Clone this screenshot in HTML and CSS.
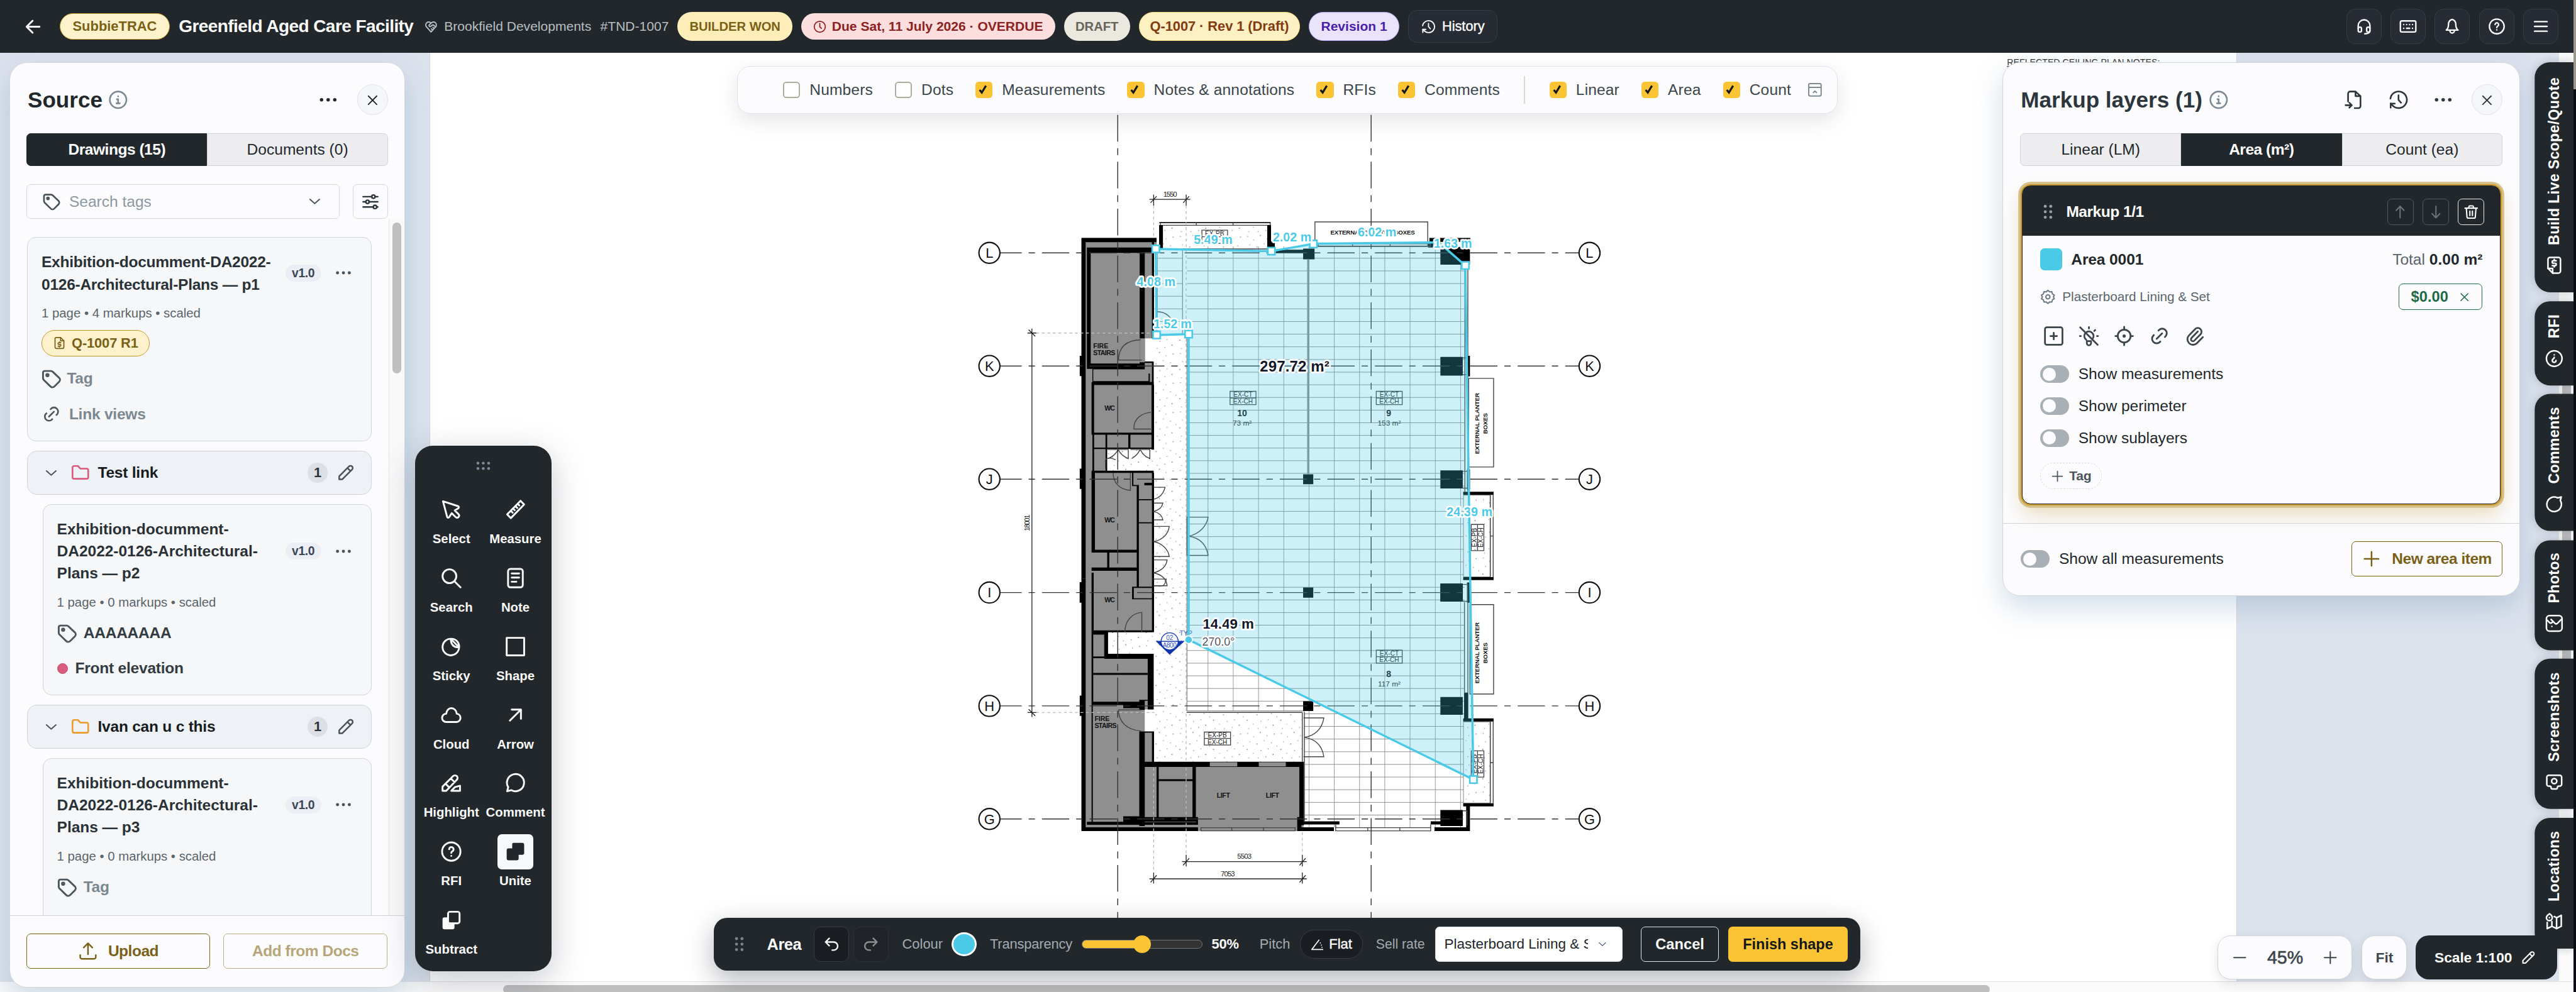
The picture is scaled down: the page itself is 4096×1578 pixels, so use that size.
FILE: index.html
```html
<!DOCTYPE html>
<html lang="en">
<head>
<meta charset="utf-8">
<title>Greenfield Aged Care Facility</title>
<link rel="stylesheet" href="styles.css">
</head>
<body>
<svg class="defs" aria-hidden="true">
  <symbol id="i-back" viewBox="0 0 24 24"><path d="M5 12h14M5 12l6.500 6.500M5 12l6.500-6.500"/></symbol>
  <symbol id="i-heart" viewBox="0 0 24 24"><path d="M19.500 12.600 12 21l-7.500-8.400A5 5 0 1 1 12 6a5 5 0 1 1 7.500 6.600"/><path d="M12 6 8.700 9.300a1 1 0 0 0 0 1.400l.6.600c.7.700 1.800.700 2.500 0l1-1a3.200 3.200 0 0 1 4.500 0l2.200 2.200M12.500 15.500l2 2M15 13l2 2"/></symbol>
  <symbol id="i-clock" viewBox="0 0 24 24"><circle cx="12" cy="12" r="10"/><path d="M12 6v6l3 3"/></symbol>
  <symbol id="i-history" viewBox="0 0 24 24"><path d="M12 6.500V12l3 3.500"/><path d="M5.500 19.500A10 10 0 1 0 2.200 10.500"/><path d="M2.500 21.500v-5h5"/><path d="M2.500 16.500l3 3"/></symbol>
  <symbol id="i-headset" viewBox="0 0 24 24"><path d="M4 15v-4a8 8 0 0 1 16 0v4"/><rect x="4" y="13" width="4.500" height="6.500" rx="2"/><rect x="15.500" y="13" width="4.500" height="6.500" rx="2"/><path d="M20 18c0 2.500-3 4-7 4"/></symbol>
  <symbol id="i-keyboard" viewBox="0 0 24 24"><rect x="1.500" y="4.500" width="21" height="15" rx="2"/><path d="M6 9.500h.01M10 9.500h.01M14 9.500h.01M18 9.500h.01M6 14.500h.01M10 14.500h4M18 14.500h.01"/></symbol>
  <symbol id="i-bell" viewBox="0 0 24 24"><path d="M12 2.500C8.500 3.500 7 6 7 9.500c0 4-1 6-3 7.500h16c-2-1.500-3-3.500-3-7.500 0-3.500-1.500-6-5-7zM9 17v1a3 3 0 0 0 6 0v-1"/></symbol>
  <symbol id="i-help" viewBox="0 0 24 24"><circle cx="12" cy="12" r="10"/><path d="M9.700 9.500a2.400 2.400 0 1 1 3.600 2.100c-.9.500-1.300 1-1.300 1.900M12 16.700v.01"/></symbol>
  <symbol id="i-menu" viewBox="0 0 24 24"><path d="M3.500 5.500h17M3.500 12h17M3.500 18.500h17"/></symbol>
  <symbol id="i-info" viewBox="0 0 24 24"><circle cx="12" cy="12" r="10"/><path d="M12 7.700v.01M10.500 11.300H12V16M10 16.200h4"/></symbol>
  <symbol id="i-dots" viewBox="0 0 24 24"><g fill="currentColor" stroke="none"><circle cx="4" cy="12" r="2.100"/><circle cx="12" cy="12" r="2.100"/><circle cx="20" cy="12" r="2.100"/></g></symbol>
  <symbol id="i-x" viewBox="0 0 24 24"><path d="M5 5l14 14M19 5 5 19"/></symbol>
  <symbol id="i-tag" viewBox="0 0 24 24"><path d="M3 5v6.200c0 .8.300 1.500.9 2.100l7.300 7.100a3 3 0 0 0 4.200 0l5.200-5.200a3 3 0 0 0 0-4.200l-7-6.600a3 3 0 0 0-2-.900H5A2 2 0 0 0 3 5z"/><circle cx="7.800" cy="8" r="1.200"/></symbol>
  <symbol id="i-down" viewBox="0 0 24 24"><path d="M4 8.500l8 7 8-7"/></symbol>
  <symbol id="i-sliders" viewBox="0 0 24 24"><path d="M2 5h12M18.500 5H22M2 12h3.500M10 12h12M2 19h14M20.500 19H22"/><circle cx="16" cy="5" r="2.300"/><circle cx="8" cy="12" r="2.300"/><circle cx="18.200" cy="19" r="2.300"/></symbol>
  <symbol id="i-link" viewBox="0 0 24 24"><path d="M9 15l6-6M11 6l.5-.6a5 5 0 0 1 7.100 7.100L18 13M13 18l-.4.500a5 5 0 0 1-7.100-7.100L6 11"/></symbol>
  <symbol id="i-folder" viewBox="0 0 24 24"><path d="M4.500 4H9l3 3.200h7.500a2 2 0 0 1 2 2V17.500a2 2 0 0 1-2 2h-15a2 2 0 0 1-2-2V6a2 2 0 0 1 2-2z"/></symbol>
  <symbol id="i-pencil" viewBox="0 0 24 24"><path d="M3.500 20.500h4L20 8a2.800 2.800 0 0 0-4-4L3.500 16.500zM14 6l4 4"/></symbol>
  <symbol id="i-filedollar" viewBox="0 0 24 24"><path d="M14 2v6h6"/><path d="M17.500 22h-11a2.500 2.500 0 0 1-2.500-2.500v-15A2.500 2.500 0 0 1 6.500 2H14l6 6v11.500a2.500 2.500 0 0 1-2.500 2.500z"/><path d="M14.500 11.500h-3.500a1.600 1.600 0 0 0 0 3.200h2a1.600 1.600 0 0 1 0 3.200H9.500M12 10v1.500M12 18v1.500"/></symbol>
  <symbol id="i-upload" viewBox="0 0 24 24"><path d="M2 17v2.500A2.500 2.500 0 0 0 4.500 22h15a2.500 2.500 0 0 0 2.500-2.500V17M6.500 7.500 12 2l5.500 5.500M12 2v14"/></symbol>
  <symbol id="i-select" viewBox="0 0 24 24"><path d="M3 3 7.500 20c.5 1.200 1.700 1.200 2.300.1L12.500 16l4.400 4.300a2.200 2.200 0 0 0 3.100-3.100L15.800 13l3.600-2.300c1.300-.8 1-2-.4-2.500z"/></symbol>
  <symbol id="i-ruler" viewBox="0 0 24 24"><path d="M17.500 2.500l4 4L7 21.300l-4-4zM14.500 5.800l1.700 1.700M12 8.300l2 2M9.500 10.900l1.700 1.700M7 13.400l2 2"/></symbol>
  <symbol id="i-search" viewBox="0 0 24 24"><circle cx="10" cy="10" r="7.500"/><path d="M22 22l-6.500-6.500"/></symbol>
  <symbol id="i-note" viewBox="0 0 24 24"><rect x="4" y="2" width="16" height="20" rx="2.500"/><path d="M8 7h8M8 11.500h8M8 16h5"/></symbol>
  <symbol id="i-sticky" viewBox="0 0 24 24"><path d="M20.500 13 11.500 3.500A9 9 0 1 0 20.500 13c-6 0-9-3-9-9.500M12 3.500c5 0 9 4 8.500 9.500"/></symbol>
  <symbol id="i-shape" viewBox="0 0 24 24"><path d="M2.500 2.500h19v19h-19z"/></symbol>
  <symbol id="i-cloud" viewBox="0 0 24 24"><path d="M6.500 19.500C4 19.500 2 17.500 2 15s2-4.500 4.500-4.500C7 7 9 4.500 12 4.500c3.200 0 5.500 2.300 6 6 2.200.2 4 2 4 4.500s-2 4.500-4 4.500z"/></symbol>
  <symbol id="i-arrow" viewBox="0 0 24 24"><path d="M6 18 18 6M8 6h10v10"/></symbol>
  <symbol id="i-highlight" viewBox="0 0 24 24"><path d="M2.500 20.500h4L18 8.500a2.800 2.800 0 0 0-4-4L2.500 16zM11.500 7l4 4M6 13l3.500 3.500M21.500 15v5.500H12l4-4z"/></symbol>
  <symbol id="i-comment" viewBox="0 0 24 24"><path d="M3 21l1.200-4.500a9.300 9.300 0 1 1 3.500 3.300z"/></symbol>
  <symbol id="i-unite" viewBox="0 0 24 24"><path fill="currentColor" stroke="none" d="M10 2.500h9.500a2 2 0 0 1 2 2V13.500a2 2 0 0 1-2 2h-4V19.500a2 2 0 0 1-2 2H4.500a2 2 0 0 1-2-2V10.500a2 2 0 0 1 2-2H8.500V4a1.500 1.500 0 0 1 1.500-1.500z"/></symbol>
  <symbol id="i-subtract" viewBox="0 0 24 24"><path fill="currentColor" stroke="none" d="M9 9H4.500a2 2 0 0 0-2 2v9a2 2 0 0 0 2 2h9a2 2 0 0 0 2-2v-4H10a1 1 0 0 1-1-1z"/><rect x="8.500" y="3" width="12.500" height="12.500" rx="2"/></symbol>
  <symbol id="i-collapse" viewBox="0 0 24 24"><rect x="2" y="2" width="20" height="20" rx="2.500"/><path d="M2 8h20M9.500 16.500 12 14l2.500 2.500"/></symbol>
  <symbol id="i-check" viewBox="0 0 24 24"><path d="M3 12.500l4 5L14.500 5"/></symbol>
  <symbol id="i-export" viewBox="0 0 24 24"><path d="M14 2v5.500h6M5 14V4.500A2.500 2.500 0 0 1 7.500 2H14l6 5.500v12a2.500 2.500 0 0 1-2.500 2.500H13M2 18.500h7.500M6.500 15.500l3 3-3 3"/></symbol>
  <symbol id="i-up2" viewBox="0 0 24 24"><path d="M12 3v18M12 3 6 9.500M12 3l6 6.500"/></symbol>
  <symbol id="i-down2" viewBox="0 0 24 24"><path d="M12 3v18M12 21l-6-6.500M12 21l6-6.500"/></symbol>
  <symbol id="i-trash" viewBox="0 0 24 24"><path d="M2.500 6h19M4.500 6l1 13.500a2 2 0 0 0 2 2h9a2 2 0 0 0 2-2L19.500 6M8.500 6V4a1.500 1.500 0 0 1 1.500-1.500h4A1.500 1.500 0 0 1 15.500 4v2M10 10.500v7M14 10.500v7"/></symbol>
  <symbol id="i-gear" viewBox="0 0 24 24"><circle cx="12" cy="12" r="3.200"/><path d="M12 1.800l2.600 2.400 3.500-.2.900 3.400 3 1.800L20.500 12l1.500 2.800-3 1.800-.9 3.400-3.500-.2L12 22.200l-2.600-2.400-3.500.2-.9-3.400-3-1.800L3.500 12 2 9.200l3-1.800L5.900 4l3.500.2z"/></symbol>
  <symbol id="i-addbox" viewBox="0 0 24 24"><rect x="2.500" y="2.500" width="19" height="19" rx="2"/><path d="M12 8.500v7M8.500 12h7"/></symbol>
  <symbol id="i-bulboff" viewBox="0 0 24 24"><path d="M2.500 2.500l19 19M12 2.300v1.500M3.200 12h-1M21.800 12h-1M18.800 5.500l-1 1M9.500 7.700a5 5 0 0 1 6.800 6.800M7.600 9.500A5 5 0 0 0 9 16M9.700 17.500h4.600v2.300a2 2 0 0 1-4.600 0z"/></symbol>
  <symbol id="i-target" viewBox="0 0 24 24"><circle cx="12" cy="12" r="7"/><circle cx="12" cy="12" r=".8"/><path d="M12 2v3M12 19v3M2.500 12h2.500M19 12h2.500"/></symbol>
  <symbol id="i-clip" viewBox="0 0 24 24"><path d="M15.500 7 8.700 14a2 2 0 0 0 3 3l6.600-6.800a4 4 0 0 0-5.700-5.800L6 11.200a6 6 0 0 0 8.500 8.600l6.500-6.600"/></symbol>
  <symbol id="i-plus" viewBox="0 0 24 24"><path d="M12 3v18M3 12h18"/></symbol>
  <symbol id="i-minus" viewBox="0 0 24 24"><path d="M3 12h18"/></symbol>
  <symbol id="i-photo" viewBox="0 0 24 24"><rect x="2" y="2" width="20" height="20" rx="4"/><path d="M15 8h.01M3 17l5-5c1-.9 2-.9 3 0l5 5M14 14l1-1c1-.9 2-.9 3 0l3 3"/></symbol>
  <symbol id="i-camera" viewBox="0 0 24 24"><path d="M5 6.500h1a2 2 0 0 0 2-2A1.500 1.500 0 0 1 9.500 3h5A1.500 1.500 0 0 1 16 4.500a2 2 0 0 0 2 2h1a2.500 2.500 0 0 1 2.500 2.500v9a2.500 2.500 0 0 1-2.500 2.500H5A2.500 2.500 0 0 1 2.500 18V9A2.500 2.500 0 0 1 5 6.500z"/><circle cx="12" cy="13" r="3.300"/></symbol>
  <symbol id="i-map" viewBox="0 0 24 24"><path d="M12 18.500l-3-1.500-6 3V6l6-3 6 3 6-3v8M9 3v14M15 6v6M18 22s4-2.500 4-5a3.500 3.500 0 0 0-7.500 0c0 2.500 3.500 5 3.500 5zM18.200 17v.01"/></symbol>
  <symbol id="i-undo" viewBox="0 0 24 24"><path d="M9 14 4 9l5-5M4 9h11a5.500 5.500 0 0 1 0 11h-2"/></symbol>
  <symbol id="i-redo" viewBox="0 0 24 24"><path d="M15 14l5-5-5-5M20 9H9a5.500 5.500 0 0 0 0 11h2"/></symbol>
  <symbol id="i-pitch" viewBox="0 0 24 24"><path d="M22 21H2L15 4"/><path d="M17.500 9v.01M19.500 13v.01M20.500 17v.01"/></symbol>
  <symbol id="i-grip" viewBox="0 0 12 18"><g fill="currentColor" stroke="none"><circle cx="2.500" cy="2" r="1.900"/><circle cx="9.500" cy="2" r="1.900"/><circle cx="2.500" cy="9" r="1.900"/><circle cx="9.500" cy="9" r="1.900"/><circle cx="2.500" cy="16" r="1.900"/><circle cx="9.500" cy="16" r="1.900"/></g></symbol>
</svg>

<div class="app">
  <header class="topbar">
    <svg class="ic s20 back"><use href="#i-back"/></svg>
    <span class="pill brand">SubbieTRAC</span>
    <h1 class="job">Greenfield Aged Care Facility</h1>
    <span class="client"><svg class="ic s13"><use href="#i-heart"/></svg>Brookfield Developments</span>
    <span class="jobno">#TND-1007</span>
    <span class="pill won">BUILDER WON</span>
    <span class="pill due"><svg class="ic s12"><use href="#i-clock"/></svg>Due Sat, 11 July 2026 · OVERDUE</span>
    <span class="pill draft">DRAFT</span>
    <span class="pill quote">Q-1007 · Rev 1 (Draft)</span>
    <span class="pill rev">Revision 1</span>
    <span class="tb-btn hist"><svg class="ic s13"><use href="#i-history"/></svg>History</span>
    <nav class="tb-right">
      <span class="tb-btn"><svg class="ic s16"><use href="#i-headset"/></svg></span>
      <span class="tb-btn"><svg class="ic s16"><use href="#i-keyboard"/></svg></span>
      <span class="tb-btn"><svg class="ic s16"><use href="#i-bell"/></svg></span>
      <span class="tb-btn"><svg class="ic s16"><use href="#i-help"/></svg></span>
      <span class="tb-btn"><svg class="ic s16"><use href="#i-menu"/></svg></span>
    </nav>
  </header>

  <main class="stage">
    <div class="sheet"></div>
    <svg class="plan" viewBox="0 96 4668 1684" preserveAspectRatio="none">
      <defs>
        <pattern id="tile" patternUnits="userSpaceOnUse" x="2188.500" y="467.900" width="45.770" height="22.940"><path d="M0 0H45.770M0 0V22.940" fill="none" stroke="#8c8c8c" stroke-width="2"/></pattern>
        <pattern id="speck" patternUnits="userSpaceOnUse" width="61" height="53"><g fill="#777"><circle cx="4" cy="5" r=".9"/><circle cx="15" cy="11" r=".8"/><circle cx="27" cy="3" r="1"/><circle cx="39" cy="9" r=".8"/><circle cx="52" cy="6" r="1"/><circle cx="8" cy="20" r=".8"/><circle cx="21" cy="24" r="1"/><circle cx="34" cy="18" r=".8"/><circle cx="47" cy="22" r=".9"/><circle cx="57" cy="28" r=".8"/><circle cx="3" cy="34" r="1"/><circle cx="14" cy="41" r=".8"/><circle cx="28" cy="36" r=".9"/><circle cx="41" cy="33" r=".8"/><circle cx="50" cy="43" r="1"/><circle cx="23" cy="49" r=".8"/><circle cx="37" cy="47" r=".9"/><circle cx="6" cy="49" r=".8"/></g></pattern>
      </defs>

      <!-- sheet notes heading -->
      <text x="3637" y="119" font-size="16" textLength="277" text-decoration="underline" fill="#333">REFLECTED CEILING PLAN NOTES:</text>

      <!-- ceiling tiles and speckled linings -->
      <path fill="url(#tile)" d="M2151 447H2654V1465H2652V1500H2364V1289H2151z"/>
      <path fill="none" stroke="#888" stroke-width="1.500" d="M2151 606V1289H2364M2143 452V604"/>
      <path fill="url(#tile)" d="M2092 453H2143V604H2092z"/>
      <path fill="url(#speck)" d="M2092 614H2150V1292H2360V1381H2092zM2008 813H2092V854H2008zM2008 1146H2092V1186H2008zM2107 408H2298V451H2107z"/>
      <path fill="#fff" d="M2652 898H2701V1046H2652zM2652 1309H2701V1456H2652z"/>
      <path fill="url(#speck)" stroke="#777" d="M2652 898H2701V1046H2652zM2652 1309H2701V1456H2652z"/>

      <!-- core: upper half -->
      <g transform="translate(1750 300) scale(.7653 .5102)">
        <path fill="#8f8f8f" d="M275 258H452V298H445V615H424V700H445V1006H331V1086H445V1470H275z"/>
        <path fill="#000" fill-rule="evenodd" d="M287 292H452V309H424V740H436V770H445V780H300V723H287zM296 311V704H412V311z"/>
        <path fill="#8f8f8f" d="M412 615h12v85h-12zM302 725h131v42h-131z"/>
        <path fill="#000" d="M274 258H452V273H284V1470H274zM441 273h5v342h-5zM270 677h14v72h-14zM270 1078h14v72h-14zM270 1482h14v72h-14zM424 697h21v5h-21zM441 697h4v85h-4zM298 770h147v10h-147zM298 770h6v185h-6zM440 780h6v230h-6zM298 950h147v7h-147zM331 957h4v130h-4zM385 957h5v48h-5zM300 1003h145v5h-145zM300 957h4v130h-4zM298 1085h147v8h-147zM298 1085h8v285h-8zM298 1366h112v10h-112zM405 1138h5v240h-5zM394 1090h3v50h-3zM396 1136h14v4h-14zM441 1093h5v415h-5zM410 1186h33v4h-33zM410 1268h33v4h-33zM423 1128h20v9h-20zM335 1376h5v54h-5zM298 1429h112v12h-112zM405 1376h5v60h-5z"/>
        <!-- swing doors -->
        <path class="thin" d="M362 692c0-50 22-70 52-72M362 692h55M398 937c0-40 20-58 44-60M398 937h44M349 1092c0 40 18 60 41 63V1092M335 1010h50v32c-14-8-20-20-24-32-4 12-10 24-24 32M390 1010h46v32c-14-8-18-20-23-32-4 12-10 24-20 32M355 1046c-12-8-20-8-24 0v32M445 1144h27c-3 20-12 38-27 42M445 1200h22c-2 15-10 26-22 30 12 4 20 15 22 30h-22M445 1283h37c-2 25-15 48-37 54 20 6 35 28 37 53h-37M445 1402h32c-2 22-12 38-32 46 20 6 30 22 32 46h-32M524 1250h50c-4 32-20 60-46 68 26 6 42 30 46 68h-50M453 520c20 0 38 18 44 65M524 1250v136"/>
        <!-- top wall, planters -->
        <path class="thin" d="M461 204h260v9h-260zM546 204v10M633 204v10M461 297h260"/>
        <path fill="#000" d="M458 202h264v3H458zM458 212h9v86h-9zM714 212h9v98h-9zM723 270h9v22h-9zM734 300h65v12h-65zM799 296h27v38h-27zM1124 290h70v63h-17v-60l-53 60zM1124 290h53v63h-53zM1098 258h97v14h-97zM1184 258h10v92h-10zM1095 272h12v20h-12z"/>
        <path class="thin" fill="#fff" d="M827 201h267v86h-267z"/>
        <path class="thin" d="M835 279h265v9h-265zM916 279v9M1005 279v9"/>
        <!-- columns -->
        <path fill="#000" d="M1124 681h53v66h-53zM1124 1084h53v64h-53zM1124 1486h53v64h-53zM799 1098h24v35h-24zM799 1500h24v36h-24zM1187 677h7v73h-7zM1187 1080h7v72h-7zM1187 1482h7v72h-7zM1178 1160h72v11h-72zM1178 1463h72v11h-72z"/>
        <path class="thin" d="M1182 350V1160M1189 350V1160M1242 1171v292M1249 1171v292M1242 1317h7M1177 684h12v60h-12M1177 1087h12v60h-12M1177 1489h12v60h-12"/>
        <path class="partition" d="M811 334V1098"/>
        <path class="thin" fill="#fff" d="M1191 757h59v315h-59z"/>
      </g>

      <!-- core: lower half -->
      <g transform="translate(1750 1050) scale(.7653 .38265)">
        <path fill="#8f8f8f" d="M275 -2H445V251H337V354H445V618H424V725H445V868H800V1194H275z"/>
        <path fill="#000" d="M274 -2h10V1176h-10zM270 15h14v95h-14zM270 552h14v96h-14zM298 -30h5v280h-5zM441 -2h5v253h-5zM394 36h50v6h-50zM394 36h4v60h-4zM394 91h50v5h-50zM405 -40h5v80h-5zM298 243h147v9h-147zM298 243h39v20h-39zM328 251h9v120h-9zM328 354h117v24H328zM298 251h4v346h-4zM298 367h36v8h-36zM298 445h134v9h-134zM431 360h14v258h-14zM298 581h126v16h-126zM373 590h51v22h-51zM411 572h13v48h-13zM424 572h21v5h-21zM411 722h13v448h-13zM411 722h34v6h-34zM441 722h5v160h-5zM298 597h3v553h-3zM424 866H800V890H424zM452 890h5v240h-5zM457 948h80v9h-80zM537 890h8v245h-8zM424 1128h126v36H287v-14h86v-26h51zM274 1176h276v18H274zM790 866h11v300h-11zM785 1148h100v15H785zM785 1176h87v18h-87zM785 1128h10v60h-10zM1101 1148h28v15h-28zM1110 1176h84v18h-84zM1185 1070h9v124h-9zM1178 1062h72v15h-72zM1178 660h72v15h-72zM1124 1094h53v76h-53zM1124 559h53v84h-53zM799 579h24v46h-24zM1124 22h53v83h-53zM1180 538h10v130h-10z"/>
        <path fill="#8f8f8f" d="M578 868h65v20h-65zM694 868h64v20h-64zM424 1150h122v2h-122z"/>
        <path class="thin" fill="#fff" d="M1194 121h56v424h-56z"/>
        <path class="thin" d="M1181 110V540M1189 110V540M1242 675v387M1249 675v387M1242 870h7M557 1178h223v15h-223zM630 1178v15M705 1178v15M876 1163v30h225v-30M876 1178h225M952 1178v15M1028 1178v15M1177 1098h10v70M362 618c0 60 20 98 54 102M362 620h54M377 250c0-50 16-88 40-92v92M800 658h48c-4 50-20 84-46 92 26 8 42 40 46 92h-48M802 630v520M797 632v234M797 632H523M445 0h30c-2 20-5 28-8 32h-22"/>
      </g>

      <!-- grid lines -->
      <g fill="none" stroke="#333" stroke-width="1.600" stroke-dasharray="49.500 12.500 11.500 12.700">
        <path d="M1812 458.700H2861M1812 663.800H2861M1812 868.900H2861M1812 1074.500H2861M1812 1280H2861M1812 1485H2861" stroke-dashoffset="10"/>
        <path stroke-dasharray="48.500 12 12.500 12" d="M2025.500 208.500V1670M2484.700 208.500V1670"/>
      </g>
      <g fill="#fff" stroke="#111" stroke-width="2.400">
        <circle cx="1793" cy="458.700" r="19"/><circle cx="1793" cy="663.800" r="19"/><circle cx="1793" cy="868.900" r="19"/><circle cx="1793" cy="1074.500" r="19"/><circle cx="1793" cy="1280" r="19"/><circle cx="1793" cy="1485" r="19"/>
        <circle cx="2880.500" cy="458.700" r="19"/><circle cx="2880.500" cy="663.800" r="19"/><circle cx="2880.500" cy="868.900" r="19"/><circle cx="2880.500" cy="1074.500" r="19"/><circle cx="2880.500" cy="1280" r="19"/><circle cx="2880.500" cy="1485" r="19"/>
      </g>
      <g class="mid" font-size="25" fill="#111">
        <text x="1793" y="467.700">L</text><text x="1793" y="672.800">K</text><text x="1793" y="877.900">J</text><text x="1793" y="1083.500">I</text><text x="1793" y="1289">H</text><text x="1793" y="1494">G</text>
        <text x="2880.500" y="467.700">L</text><text x="2880.500" y="672.800">K</text><text x="2880.500" y="877.900">J</text><text x="2880.500" y="1083.500">I</text><text x="2880.500" y="1289">H</text><text x="2880.500" y="1494">G</text>
      </g>

      <!-- dimensions -->
      <g fill="none" stroke="#222" stroke-width="1.500">
        <path d="M2083 361.700H2157M2090.600 353V373M2149.500 353V373M2085 368l11-12M2144 368l11-12M1870 596V1300M1862 604H1878M1864 598l12 12M1862 1292H1878M1864 1286l12 12M2142 1562.400H2368M2149.500 1550V1571M2360 1550V1571M2144 1569l11-13M2355 1569l11-13M2083 1593.500H2368M2090.600 1582V1602M2360 1582V1602M2085 1600l11-13M2355 1600l11-13"/>
        <path stroke="#bbb" stroke-dasharray="5 5" d="M2090.600 373V430M2149.500 373V606M1878 604H2092M1878 1292H2092M2090.600 1392V1580M2149.500 1392V1550M2360 1509V1550M2149.500 614V1381"/>
      </g>
      <g class="mid" font-size="13" fill="#222">
        <text x="2120.500" y="356.500" textLength="25">1550</text><text x="2255" y="1557" textLength="26">5503</text><text x="2225" y="1589" textLength="26">7053</text>
        <text transform="translate(1865.500 948) rotate(-90)" textLength="30">18001</text>
      </g>

      <!-- room labels -->
      <g font-size="12" font-weight="700" fill="#111">
        <text x="1981" y="632">FIRE</text><text x="1981" y="644.500" textLength="40">STAIRS</text>
        <text x="1983.500" y="1307.500">FIRE</text><text x="1983.500" y="1320" textLength="40">STAIRS</text>
        <g class="mid"><text x="2011" y="745" textLength="19">WC</text><text x="2011" y="947" textLength="19">WC</text><text x="2011" y="1092.500" textLength="19">WC</text>
        <text x="2217" y="1446.500" textLength="24">LIFT</text><text x="2306" y="1446.500" textLength="24">LIFT</text>
        <text x="2487.500" y="425" font-size="11" textLength="153">EXTERNAL PLANTER BOXES</text>
        <g font-size="11"><text transform="translate(2681 768) rotate(-90)" textLength="111">EXTERNAL PLANTER</text><text transform="translate(2695 768) rotate(-90)" textLength="38">BOXES</text>
        <text transform="translate(2681 1184) rotate(-90)" textLength="111">EXTERNAL PLANTER</text><text transform="translate(2695 1184) rotate(-90)" textLength="38">BOXES</text></g></g>
      </g>
      <g class="mid" font-size="11.500" fill="#222">
        <path fill="none" stroke="#444" stroke-width="1.500" d="M2229 709.700h47v24h-47zM2229 721.700h47M2494 709.700h47v24h-47zM2494 721.700h47M2494 1179h47v23.500h-47zM2494 1190.700h47M2182.400 1327.400h47.500v23.500h-47.500zM2182.400 1339h47.500M2178 417.500h46.500v24h-46.500zM2178 429.500h46.500M2666 951h23v47.500h-23zM2677.500 951v47.500M2666 1361.500h23v47.500h-23zM2677.500 1361.500v47.500"/>
        <text x="2252.500" y="719.700">EX-CT</text><text x="2252.500" y="731.700">EX-CH</text>
        <text x="2517.500" y="719.700">EX-CT</text><text x="2517.500" y="731.700">EX-CH</text>
        <text x="2517.500" y="1189">EX-CT</text><text x="2517.500" y="1200.700">EX-CH</text>
        <text x="2206" y="1337.300">EX-PB</text><text x="2206" y="1349.200">EX-CH</text><text x="2201" y="427.700">EX-PB</text>
        <text transform="translate(2675.500 974.700) rotate(-90)">EX-PB</text><text transform="translate(2687.500 974.700) rotate(-90)">EX-CH</text>
        <text transform="translate(2675.500 1385) rotate(-90)">EX-PB</text><text transform="translate(2687.500 1385) rotate(-90)">EX-CH</text>
        <g font-size="16" font-weight="700" fill="#111"><text x="2251" y="754.800">10</text><text x="2516.500" y="754.800">9</text><text x="2516.500" y="1227.500">8</text></g>
        <g font-size="13.500"><text x="2251" y="771.500">73 m²</text><text x="2517.500" y="771.500">153 m²</text><text x="2517.500" y="1244.500">117 m²</text></g>
      </g>

      <!-- section marker -->
      <g stroke="#1136ad" stroke-width="1.600" fill="#1136ad">
        <path d="M2096 1163H2145L2119.600 1186z"/><circle cx="2119.600" cy="1163" r="15.500" fill="#fff"/><path d="M2104 1163H2135"/>
      </g>
      <g class="mid" font-size="11.500" fill="#3358cf"><text x="2119.600" y="1160.500">02</text><text x="2119.600" y="1174" textLength="25">A800</text><text x="2149" y="1152" font-size="12">TYP</text></g>

      <!-- measured area -->
      <path fill="#4bcae8" fill-opacity=".27" stroke="#4bcae8" stroke-width="4" stroke-linejoin="round" d="M2094.400 451.500L2304 455.600 2379.800 442.300 2607 439.500 2655.400 481.600 2669.900 1413.500 2154 1160V606L2095.900 607.700z"/>
      <g fill="#fff" stroke="#4bcae8" stroke-width="3">
        <path d="M2088 445h13v13h-13zM2297.500 449h13v13h-13zM2373.500 436h13v13h-13zM2649 475h13v13h-13zM2663.500 1407h13v13h-13zM2147.500 599.500h13v13h-13zM2089.500 601h13v13h-13z"/>
      </g>
      <circle cx="2154" cy="1160" r="7" fill="#4bcae8" stroke="#fff" stroke-width="2"/>
      <g class="mid halo" font-size="22.500" font-weight="700" fill="#4bcae8">
        <text x="2198.500" y="442.500" textLength="70">5.49 m</text><text x="2341.600" y="437.500" textLength="70">2.02 m</text><text x="2495.500" y="429" textLength="70">6.02 m</text><text x="2633" y="449.500" textLength="69">1.63 m</text>
        <text x="2095" y="518.500" textLength="70">4.08 m</text><text x="2125" y="595.500" textLength="69">1.52 m</text><text x="2663" y="936.500" textLength="83">24.39 m</text>
        <text x="2346" y="673.500" font-size="27.500" fill="#121829" textLength="126">297.72 m²</text>
        <text x="2226" y="1140.500" font-size="25.500" fill="#121829" textLength="93">14.49 m</text>
        <text x="2208" y="1170.500" font-size="20.500" font-weight="400" fill="#4b5563" textLength="59">270.0°</text>
      </g>
    </svg>

    <div class="vbar"><i></i></div>
    <div class="hbar"><i></i></div>

    <section class="filters">
      <label><i class="cb"></i>Numbers</label>
      <label><i class="cb"></i>Dots</label>
      <label><i class="cb on"><svg class="ic"><use href="#i-check"/></svg></i>Measurements</label>
      <label><i class="cb on"><svg class="ic"><use href="#i-check"/></svg></i>Notes &amp; annotations</label>
      <label><i class="cb on"><svg class="ic"><use href="#i-check"/></svg></i>RFIs</label>
      <label><i class="cb on"><svg class="ic"><use href="#i-check"/></svg></i>Comments</label>
      <b class="sep"></b>
      <label><i class="cb on"><svg class="ic"><use href="#i-check"/></svg></i>Linear</label>
      <label><i class="cb on"><svg class="ic"><use href="#i-check"/></svg></i>Area</label>
      <label><i class="cb on"><svg class="ic"><use href="#i-check"/></svg></i>Count</label>
      <svg class="ic collapse"><use href="#i-collapse"/></svg>
    </section>

    <aside class="panel source">
      <div class="p-head"><h2>Source</h2><svg class="ic s18 info"><use href="#i-info"/></svg><span class="grow"></span><svg class="ic s18"><use href="#i-dots"/></svg><span class="round"><svg class="ic s13"><use href="#i-x"/></svg></span></div>
      <div class="tabs"><span class="on">Drawings (15)</span><span>Documents (0)</span></div>
      <div class="find"><div class="field"><svg class="ic s18"><use href="#i-tag"/></svg><span>Search tags</span><svg class="ic s13"><use href="#i-down"/></svg></div><span class="filter"><svg class="ic s16"><use href="#i-sliders"/></svg></span></div>
      <div class="scroll">
        <div class="list">
          <article class="card first">
            <div class="c-head"><h3>Exhibition-documment-DA2022-<br>0126-Architectural-Plans — p1</h3><span class="ver">v1.0</span><svg class="ic s16"><use href="#i-dots"/></svg></div>
            <p class="meta">1 page • 4 markups • scaled</p>
            <span class="qpill"><svg class="ic s12"><use href="#i-filedollar"/></svg>Q-1007 R1</span>
            <div class="row tag"><svg class="ic s20"><use href="#i-tag"/></svg>Tag</div>
            <div class="row lnk"><svg class="ic s18"><use href="#i-link"/></svg>Link views</div>
          </article>
          <div class="folder"><svg class="ic s13"><use href="#i-down"/></svg><svg class="ic s18 pink"><use href="#i-folder"/></svg><b>Test link</b><span class="num">1</span><svg class="ic s17"><use href="#i-pencil"/></svg></div>
          <article class="card sub">
            <div class="c-head"><h3>Exhibition-documment-<br>DA2022-0126-Architectural-<br>Plans — p2</h3><span class="ver">v1.0</span><svg class="ic s16"><use href="#i-dots"/></svg></div>
            <p class="meta">1 page • 0 markups • scaled</p>
            <div class="row tag dark"><svg class="ic s20"><use href="#i-tag"/></svg>AAAAAAAA</div>
            <div class="row elev"><i class="dot"></i>Front elevation</div>
          </article>
          <div class="folder"><svg class="ic s13"><use href="#i-down"/></svg><svg class="ic s18 amber"><use href="#i-folder"/></svg><b>Ivan can u c this</b><span class="num">1</span><svg class="ic s17"><use href="#i-pencil"/></svg></div>
          <article class="card sub last">
            <div class="c-head"><h3>Exhibition-documment-<br>DA2022-0126-Architectural-<br>Plans — p3</h3><span class="ver">v1.0</span><svg class="ic s16"><use href="#i-dots"/></svg></div>
            <p class="meta">1 page • 0 markups • scaled</p>
            <div class="row tag"><svg class="ic s20"><use href="#i-tag"/></svg>Tag</div>
          </article>
        </div>
        <div class="track"><i></i></div>
      </div>
      <footer class="p-foot"><span class="btn upload"><svg class="ic s17"><use href="#i-upload"/></svg>Upload</span><span class="btn docs">Add from Docs</span></footer>
    </aside>

    <aside class="dock">
      <svg class="ic grip-h"><use href="#i-grip"/></svg>
      <div class="tools">
        <span><i><svg class="ic s20"><use href="#i-select"/></svg></i>Select</span>
        <span><i><svg class="ic s20"><use href="#i-ruler"/></svg></i>Measure</span>
        <span><i><svg class="ic s20"><use href="#i-search"/></svg></i>Search</span>
        <span><i><svg class="ic s20"><use href="#i-note"/></svg></i>Note</span>
        <span><i><svg class="ic s20"><use href="#i-sticky"/></svg></i>Sticky</span>
        <span><i><svg class="ic s20"><use href="#i-shape"/></svg></i>Shape</span>
        <span><i><svg class="ic s20"><use href="#i-cloud"/></svg></i>Cloud</span>
        <span><i><svg class="ic s20"><use href="#i-arrow"/></svg></i>Arrow</span>
        <span><i><svg class="ic s20"><use href="#i-highlight"/></svg></i>Highlight</span>
        <span><i><svg class="ic s20"><use href="#i-comment"/></svg></i>Comment</span>
        <span><i><svg class="ic s20"><use href="#i-help"/></svg></i>RFI</span>
        <span><i class="active"><svg class="ic s20"><use href="#i-unite"/></svg></i>Unite</span>
        <span><i><svg class="ic s20"><use href="#i-subtract"/></svg></i>Subtract</span>
      </div>
    </aside>

    <section class="action">
      <svg class="ic grip"><use href="#i-grip"/></svg>
      <b class="kind">Area</b>
      <span class="sq"><svg class="ic s16"><use href="#i-undo"/></svg></span>
      <span class="sq off"><svg class="ic s16"><use href="#i-redo"/></svg></span>
      <span class="lab l1">Colour</span><i class="color"></i>
      <span class="lab l2">Transparency</span>
      <span class="slider"><i></i></span>
      <span class="pct">50%</span>
      <span class="lab l3">Pitch</span>
      <span class="flat"><svg class="ic s12"><use href="#i-pitch"/></svg>Flat</span>
      <span class="lab l4">Sell rate</span>
      <span class="drop"><span>Plasterboard Lining &amp; Set</span><svg class="ic s9"><use href="#i-down"/></svg></span>
      <span class="cancel">Cancel</span>
      <span class="finish">Finish shape</span>
    </section>

    <aside class="panel layers">
      <div class="p-head"><h2>Markup layers (1)</h2><svg class="ic s18 info"><use href="#i-info"/></svg><span class="grow"></span><svg class="ic s18 m1"><use href="#i-export"/></svg><svg class="ic s18 m2"><use href="#i-history"/></svg><svg class="ic s18 m3"><use href="#i-dots"/></svg><span class="round"><svg class="ic s13"><use href="#i-x"/></svg></span></div>
      <div class="tabs"><span>Linear (LM)</span><span class="on">Area (m²)</span><span>Count (ea)</span></div>
      <article class="markup">
        <div class="m-head"><svg class="ic grip"><use href="#i-grip"/></svg><b>Markup 1/1</b><span class="mb"><svg class="ic s14"><use href="#i-up2"/></svg></span><span class="mb"><svg class="ic s14"><use href="#i-down2"/></svg></span><span class="mb live"><svg class="ic s14"><use href="#i-trash"/></svg></span></div>
        <div class="m-body">
          <div class="m-row a"><i class="swatch"></i><b>Area 0001</b><span class="total">Total <b>0.00 m²</b></span></div>
          <div class="m-row p"><svg class="ic s14"><use href="#i-gear"/></svg><span>Plasterboard Lining &amp; Set</span><span class="price">$0.00<svg class="ic s11"><use href="#i-x"/></svg></span></div>
          <div class="m-icons"><svg class="ic s20"><use href="#i-addbox"/></svg><svg class="ic s20"><use href="#i-bulboff"/></svg><svg class="ic s20"><use href="#i-target"/></svg><svg class="ic s20"><use href="#i-link"/></svg><svg class="ic s20"><use href="#i-clip"/></svg></div>
          <div class="sw"><i></i>Show measurements</div>
          <div class="sw"><i></i>Show perimeter</div>
          <div class="sw"><i></i>Show sublayers</div>
          <span class="addtag"><svg class="ic s12"><use href="#i-plus"/></svg>Tag</span>
        </div>
      </article>
      <footer class="l-foot"><div class="sw"><i></i>Show all measurements</div><span class="btn newitem"><svg class="ic s17"><use href="#i-plus"/></svg>New area item</span></footer>
    </aside>

    <div class="zoombar">
      <div class="zoomer"><svg class="ic s14"><use href="#i-minus"/></svg><span>45%</span><svg class="ic s14"><use href="#i-plus"/></svg></div>
      <span class="fit">Fit</span>
      <span class="scale">Scale 1:100<svg class="ic s14"><use href="#i-pencil"/></svg></span>
    </div>

    <nav class="rail">
      <span class="r1"><svg class="ic s17"><use href="#i-filedollar"/></svg>Build Live Scope/Quote</span>
      <span class="r2"><svg class="ic s17"><use href="#i-help"/></svg>RFI</span>
      <span class="r3"><svg class="ic s17"><use href="#i-comment"/></svg>Comments</span>
      <span class="r4"><svg class="ic s17"><use href="#i-photo"/></svg>Photos</span>
      <span class="r5"><svg class="ic s17"><use href="#i-camera"/></svg>Screenshots</span>
      <span class="r6"><svg class="ic s17"><use href="#i-map"/></svg>Locations</span>
    </nav>
  </main>
  <div class="edge"></div>
</div>
</body>
</html>
```
FILE: styles.css
```css
* { box-sizing: border-box; margin: 0; padding: 0; }
html { background: #000; overflow: hidden; }
body { font-family: "Liberation Sans", Arial, sans-serif; font-size: 14px; color: #22272b; overflow: hidden; }
i { font-style: normal; display: block; }
b, h1, h2, h3 { font-weight: 700; letter-spacing: -.02em; }
.defs { position: absolute; width: 0; height: 0; }

/* 2334 x 899 layout units across the window */
.app { zoom: 1.7549; width: 2334px; height: 899.2px; position: relative; display: flex; flex-direction: column; overflow: hidden; white-space: nowrap; }

.ic { flex: none; width: 16px; height: 16px; fill: none; stroke: currentColor; stroke-width: 2; stroke-linecap: round; stroke-linejoin: round; display: block; overflow: visible; }
.s9 { width: 9px; height: 9px; } .s11 { width: 11px; height: 11px; } .s12 { width: 12px; height: 12px; } .s13 { width: 13px; height: 13px; }
.s14 { width: 14px; height: 14px; } .s16 { width: 16px; height: 16px; } .s17 { width: 17px; height: 17px; } .s18 { width: 18px; height: 18px; } .s20 { width: 20px; height: 20px; }
.grow { flex: 1; }

/* top bar */
.topbar { height: 48px; flex: none; background: #22272b; color: #fafafa; display: flex; align-items: center; gap: 8px; padding: 0 16px 0 20px; }
.back { margin-right: 6px; }
.pill { display: flex; align-items: center; justify-content: center; height: 24px; border-radius: 12px; font-weight: 700; font-size: 12px; }
.brand { width: 100px; background: #fef2cc; border: 1px solid #c9982b; color: #7a6118; font-size: 12.500px; }
.job { width: 213px; font-size: 16px; letter-spacing: -.34px; margin-right: 1px; }
.client { width: 151px; display: flex; align-items: center; gap: 5.500px; font-size: 12px; color: #b9bfc2; }
.jobno { width: 62px; font-size: 12px; color: #b9bfc2; margin-left: 1px; }
.won { width: 104px; height: 26px; border-radius: 13px; background: #ffedba; color: #7a6118; font-size: 11.500px; }
.due { width: 230px; background: #fbdedd; color: #8c2222; gap: 5px; }
.draft { width: 60px; height: 26px; border-radius: 13px; background: #ebe8df; color: #66645a; font-size: 11.500px; }
.quote { width: 146px; height: 26px; border-radius: 13px; background: #fdf0c3; border: 1px solid #fbdf7d; color: #823b12; font-size: 12.500px; letter-spacing: -.05px; }
.rev { width: 82px; height: 26px; border-radius: 13px; background: #e9e4fb; border: 1px solid #b7a6f5; color: #4a1fa8; }
.tb-btn { width: 32px; height: 32px; border: 1px solid #383d44; background: #272b33; border-radius: 8px; display: flex; align-items: center; justify-content: center; }
.hist { width: 81px; height: 30px; gap: 6px; font-size: 12.400px; -webkit-text-stroke: .25px currentColor; }
.tb-right { margin-left: auto; display: flex; gap: 8px; }

/* canvas */
.stage { flex: 1; position: relative; background: #dde3ed; overflow: hidden; }
.sheet { position: absolute; left: 389px; top: 0; width: 1638px; height: 841.500px; background: #fff; border: 1px solid #d0d6df; border-width: 0 1px; }
.plan { position: absolute; left: 0; top: 0; width: 2334px; height: 842px; }
.plan text { font-family: "Liberation Sans", Arial, sans-serif; }
.mid { text-anchor: middle; }
.halo text { paint-order: stroke; stroke: #fff; stroke-width: 6px; stroke-linejoin: round; }
.thin { fill: none; stroke: #444; stroke-width: .8px; vector-effect: non-scaling-stroke; }
.thin[fill] { fill: #fff; }
.partition { fill: none; stroke: #8c8c8c; stroke-width: 5px; }
.vbar { position: absolute; left: 2318px; top: 0; width: 14px; bottom: 0; background: #fafafa; border-left: 1px solid #e4e4e4; }
.vbar i { position: absolute; left: 3px; top: 270px; width: 8px; height: 330px; border-radius: 4px; background: #bfbfbf; }
.hbar { position: absolute; left: 0; right: 0; bottom: 0; height: 9.700px; background: #fafafa; border-top: 1px solid #e2e2e2; }
.hbar i { position: absolute; left: 456px; top: 3px; width: 1347px; height: 8px; border-radius: 4px; background: #bfbfbf; }
.edge { position: absolute; right: 0; top: 0; width: 2px; height: 100%; background: linear-gradient(#9b978f 0 81px, #0b0d14 81px); }

/* filter bar */
.filters { position: absolute; left: 668px; top: 12px; width: 997px; height: 43px; background: #fcfcfe; border: 1px solid #dde3ed; border-radius: 12px; box-shadow: 0 6px 18px rgba(30, 40, 50, .12); display: flex; align-items: center; gap: 20px; padding-left: 41px; color: #3b454b; }
.filters label { display: flex; align-items: center; gap: 8.500px; letter-spacing: .08px; }
.cb { width: 15.500px; height: 15px; border: 1.500px solid #b0ac9c; border-radius: 3px; background: #fff; }
.cb.on { background: #fbc434; border-color: #fbc434; color: #15181a; }
.cb .ic { width: 12px; height: 12px; stroke-width: 3.600; stroke-linecap: butt; stroke-linejoin: miter; margin-left: 1px; }
.sep { width: 1px; height: 25px; background: #d8d8d2; margin: 0 2px; }
.collapse { width: 13.500px; height: 13.500px; color: #7d8a93; margin-left: -5px; }

/* floating panels */
.panel { position: absolute; background: #fcfcfe; border: 1px solid #d2d8da; border-radius: 16px; box-shadow: 0 10px 26px rgba(70, 120, 165, .25); display: flex; flex-direction: column; }
.source { left: 8.500px; top: 8.500px; width: 358.500px; height: 838.500px; overflow: hidden; }
.p-head { height: 28px; display: flex; align-items: center; }
.p-head h2 { font-size: 20px; letter-spacing: 0; }
.info { color: #7d8a93; margin-left: 5px; }
.round { width: 28px; height: 28px; border-radius: 50%; border: 1px solid #dfe3e5; background: #f5f6f8; display: grid; place-items: center; }
.source .p-head { margin: 19.500px 15px 16px 16px; }
.source .round { margin-left: 17px; }
.tabs { display: flex; height: 30px; flex: none; }
.tabs span { flex: 1; display: grid; place-items: center; background: #ededef; border: 1px solid #cfd5d7; }
.tabs span:first-child { border-radius: 4px 0 0 4px; } .tabs span:last-child { border-radius: 0 4px 4px 0; }
.tabs .on { background: #22272b; border-color: #22272b; color: #fff; font-weight: 700; letter-spacing: -.02em; }
.source .tabs { margin: 0 15px 16.500px; }
.find { display: flex; gap: 12px; margin: 0 15px; height: 31.500px; flex: none; }
.field { flex: 1; display: flex; align-items: center; border: 1px solid #d5dbdd; border-radius: 4px; padding: 0 15px 0 13px; gap: 7px; color: #47525a; }
.field span { flex: 1; color: #8d989f; }
.filter { width: 32px; border: 1px solid #d5dbdd; border-radius: 4px; display: grid; place-items: center; color: #2d363c; }
.scroll { flex: 1; display: flex; min-height: 0; overflow: hidden; }
.list { padding: 16.500px 15.500px 0 15.500px; width: 343px; display: flex; flex-direction: column; gap: 8.700px; flex: none; }
.track { flex: 1; border-left: 1px solid #e3e4e6; background: #f9f9fa; padding: 3px 0 0 3px; }
.track i { width: 8px; height: 137px; border-radius: 4px; background: #bfbfbf; }
.card { border: 1px solid #cfd5d7; border-radius: 8px; background: #f6f7f9; padding: 12px 17px 0 12.500px; flex: none; }
.first { height: 185px; }
.sub { height: 173.300px; margin-left: 14px; padding-left: 12.500px; }
.c-head { display: flex; align-items: center; color: #2a3237; }
.c-head h3 { flex: 1; font-size: 14px; line-height: 20px; }
.sub .c-head h3 { letter-spacing: -.03px; }
.first .c-head h3 { letter-spacing: -.16px; }
.ver { width: 32.500px; height: 15px; border-radius: 8px; background: #ebeef4; color: #3c4654; font-size: 11px; font-weight: 700; display: grid; place-items: center; margin-right: 12px; letter-spacing: -.2px; }
.c-head .ic { color: #47525a; }
.meta { font-size: 11.600px; line-height: 16px; color: #5a646b; margin-top: 8px; }
.qpill { width: 98px; height: 24px; border: 1px solid #c9982b; background: #fef2cc; border-radius: 12px; color: #7a6118; font-weight: 700; font-size: 12.500px; display: flex; align-items: center; justify-content: center; gap: 5px; margin-top: 7.500px; letter-spacing: -.1px; }
.row { display: flex; align-items: center; font-weight: 700; letter-spacing: -.01em; color: #7c8890; height: 20px; }
.row .ic { color: #4b565d; }
.tag { gap: 4px; margin-top: 10px; }
.first .tag .ic, .sub .tag .ic { margin-left: -1px; }
.lnk { gap: 7px; margin-top: 12.500px; }
.sub .meta { margin-top: 8.500px; }
.sub .tag { gap: 5px; margin-top: 10px; margin-bottom: 12px; }
.row.dark, .row.elev { color: #333c42; }
.elev { gap: 6.500px; }
.dot { width: 10px; height: 10px; border-radius: 50%; background: #d95b7e; border: 1px solid #c24d70; }
.folder { height: 39.500px; flex: none; border: 1px solid #cfd5d7; border-radius: 9px; background: #eef1f6; display: flex; align-items: center; padding: 0 14px 0 15px; color: #47525a; }
.folder b { color: #181c1f; flex: 1; margin-left: 7px; letter-spacing: -.01em; }
.folder .pink, .folder .amber { margin-left: 10.500px; }
.folder .pink { color: #d95b7e; } .folder .amber { color: #ef9a2d; }
.num { width: 18.500px; height: 18px; border-radius: 9px; background: #dcdfe6; font-size: 12.500px; font-weight: 700; color: #2d363c; display: grid; place-items: center; margin-right: 8px; }
.p-foot { height: 65px; flex: none; border-top: 1px solid #cfd5d7; padding: 16px 15px 0; display: flex; gap: 12px; }
.btn { height: 32px; border: 1px solid #7a6118; border-radius: 4px; color: #7a6118; font-weight: 700; letter-spacing: -.02em; display: flex; align-items: center; justify-content: center; }
.upload { width: 166.500px; gap: 10px; }
.docs { width: 148.500px; border-color: #bcae86; color: #b7a679; }

/* tool dock */
.dock { position: absolute; left: 376px; top: 356px; width: 124px; height: 476.500px; border-radius: 16px; background: #22272b; color: #fafafa; box-shadow: 0 8px 30px rgba(30, 40, 60, .25); padding-top: 11px; }
.grip-h { width: 8.500px; height: 12.500px; margin: 1px auto 0; transform: rotate(90deg); color: #7d8a9b; }
.tools { display: grid; grid-template-columns: 58px 58px; grid-auto-rows: 62px; margin: 17.500px 0 0 4px; }
.tools span { display: flex; flex-direction: column; align-items: center; font-size: 11.600px; font-weight: 700; line-height: 16px; gap: 2.500px; }
.tools i { width: 32px; height: 32px; border-radius: 4px; display: grid; place-items: center; }
.tools .active { background: #f7f8fa; color: #22272b; }

/* action bar */
.action { position: absolute; left: 646.500px; top: 784px; width: 1039px; height: 48px; border-radius: 12px; background: #22272b; color: #fafafa; box-shadow: 0 8px 24px rgba(20, 25, 45, .32); display: flex; align-items: center; padding: 0 11.500px 0 19px; font-size: 12.500px; }
.grip { width: 8.500px; height: 13.500px; color: #7d858c; }
.kind { font-size: 14.500px; width: 31px; margin-left: 21px; }
.sq { width: 32px; height: 32px; border: 1px solid #383d46; border-radius: 6px; background: #1a1d22; display: grid; place-items: center; margin-left: 11.500px; }
.sq.off { margin-left: 4px; opacity: .5; background: #1f2327; }
.lab { color: #a3abb0; }
.l1 { margin-left: 12px; width: 38px; }
.color { width: 23px; height: 22px; border-radius: 50%; background: #4bcae8; border: 2px solid #fff; margin-left: 6.500px; }
.l2 { margin-left: 12px; width: 75.500px; letter-spacing: -.1px; }
.slider { width: 109px; height: 8px; margin-left: 8px; border: 1px solid #777; border-radius: 4px; background: linear-gradient(90deg, #fbc434 50%, #333 50%); display: flex; align-items: center; justify-content: center; }
.slider i { width: 16px; height: 16px; flex: none; border-radius: 50%; background: #fbc434; }
.pct { width: 25px; margin-left: 8.500px; font-weight: 700; letter-spacing: -.1px; }
.l3 { margin-left: 18.500px; width: 29px; }
.flat { width: 57px; height: 26px; border-radius: 13px; border: 1px solid #383d46; background: #1a1d22; margin-left: 7.500px; display: flex; align-items: center; justify-content: center; gap: 5px; font-size: 12.500px; -webkit-text-stroke: .25px currentColor; }
.flat .ic { -webkit-text-stroke: 0; }
.l4 { margin-left: 12px; width: 45px; font-size: 12.100px; }
.drop { width: 170px; height: 32px; border-radius: 4px; border: 1px solid #d5dbdd; background: #fff; color: #22272b; margin-left: 8.500px; padding: 0 13px 0 8px; display: flex; align-items: center; gap: 9px; font-size: 12.800px; }
.drop span { width: 131px; overflow: hidden; }
.drop .ic { color: #5b677c; }
.cancel { width: 71px; height: 32px; border: 1px solid #dfe3e5; border-radius: 4px; margin-left: 16.500px; display: grid; place-items: center; font-size: 13.500px; font-weight: 700; }
.finish { width: 108px; height: 32px; border-radius: 4px; margin-left: 8.500px; background: #fbc434; color: #15181a; display: grid; place-items: center; font-size: 13.400px; font-weight: 700; }

/* markup layers */
.layers { left: 1814.500px; top: 8.500px; width: 469px; height: 483.500px; }
.layers .p-head { margin: 19.500px 15.500px 16px 16px; color: #2d363c; }
.layers .info { margin-left: 5.500px; }
.m1 { margin-right: 22.500px; } .m2 { margin-right: 22px; } .m3 { margin-right: 17px; }
.layers .tabs { margin: 0 15.500px 17.500px; }
.markup { margin: 0 17px; height: 289px; flex: none; border: 1px solid #22272b; border-radius: 8px; background: #fcfcfe; box-shadow: 0 0 0 1.200px #cb9a2b, 0 0 0 3.300px #d6bf86, 0 8px 18px rgba(190, 150, 50, .33); }
.m-head { height: 45px; background: #22272b; border-radius: 6px 6px 0 0; color: #fff; display: flex; align-items: center; padding: 2px 14.500px 0 19px; }
.m-head .grip { color: #9a9fa3; }
.m-head b { flex: 1; margin-left: 12px; }
.mb { width: 24px; height: 24px; border: 1px solid #54595d; border-radius: 4px; color: #6d7276; display: grid; place-items: center; margin-left: 8px; }
.mb.live { border-color: #e8eaeb; color: #fff; }
.m-body { padding: 11.500px 16px 0 16px; }
.m-row { display: flex; align-items: center; }
.m-row.a { height: 20px; }
.swatch { width: 20px; height: 20px; border-radius: 4px; background: #4bcae8; }
.m-row.a > b { margin-left: 8px; flex: 1; letter-spacing: -.005em; }
.total { color: #5a646b; } .total b { color: #22272b; letter-spacing: 0; }
.m-row.p { height: 24px; margin-top: 12px; font-size: 11.800px; color: #5a646b; }
.m-row.p > .ic { color: #6e7b83; }
.m-row.p > span:nth-of-type(1) { margin-left: 6px; flex: 1; }
.price { width: 76px; height: 24px; border: 1px solid #1f6b47; border-radius: 4px; color: #1f6b47; font-weight: 700; font-size: 13.500px; display: flex; align-items: center; justify-content: center; gap: 9px; }
.m-icons { display: flex; gap: 12px; margin: 13.500px 0 10px 2px; color: #3b454b; }
.m-icons .ic { stroke-width: 1.900; }
.sw { display: flex; align-items: center; gap: 8.500px; height: 29px; }
.sw i { width: 26px; height: 16px; border-radius: 8px; background: #a8b0b5; padding: 2px; }
.sw i::before { content: ""; display: block; width: 12px; height: 12px; border-radius: 50%; background: #fcfcfe; }
.addtag { margin-top: 8px; width: 55.500px; height: 24px; border: 1px dashed #d5dbdd; border-radius: 12px; display: flex; align-items: center; justify-content: center; gap: 5px; font-size: 12px; font-weight: 700; color: #4b555b; letter-spacing: -.2px; }
.l-foot { margin-top: 17px; flex: 1; border-top: 1px solid #cfd5d7; display: flex; align-items: flex-start; justify-content: space-between; padding: 16px 15.500px 0 16px; }
.l-foot .sw { height: 32px; }
.newitem { width: 137px; gap: 10px; }

/* zoom controls */
.zoombar { position: absolute; left: 2009px; top: 800px; display: flex; gap: 9px; }
.zoomer, .fit { height: 40px; background: #fcfcfe; border: 1px solid #d0d6d8; border-radius: 12px; display: flex; align-items: center; justify-content: center; color: #3b454b; box-shadow: 0 3px 10px rgba(30, 40, 60, .12); }
.zoomer { width: 122px; justify-content: space-between; padding: 0 12px 0 13px; font-size: 16.300px; -webkit-text-stroke: .35px currentColor; }
.fit { width: 41px; font-weight: 700; font-size: 13px; }
.scale { width: 128px; height: 40px; background: #22272b; border-radius: 12px; color: #fff; display: flex; align-items: center; justify-content: center; gap: 8px; font-size: 13px; font-weight: 700; margin-left: -1px; letter-spacing: -.05px; padding-right: 2px; }

/* side rail */
.rail { position: absolute; right: 2px; top: 8.500px; width: 35.500px; display: flex; flex-direction: column; gap: 8px; }
.rail span { background: #22272b; color: #fff; border-radius: 0 14px 14px 0; writing-mode: vertical-rl; transform: rotate(180deg); display: flex; align-items: center; padding-top: 16px; gap: 9.500px; font-size: 13.200px; font-weight: 700; letter-spacing: .18px; box-shadow: 0 0 8px rgba(30, 40, 60, .25); }
.r1 { height: 208.500px; } .r2 { height: 76.500px; } .r3 { height: 124px; } .r4 { height: 100px; } .r5 { height: 136px; } .r6 { height: 118.500px; }
```
